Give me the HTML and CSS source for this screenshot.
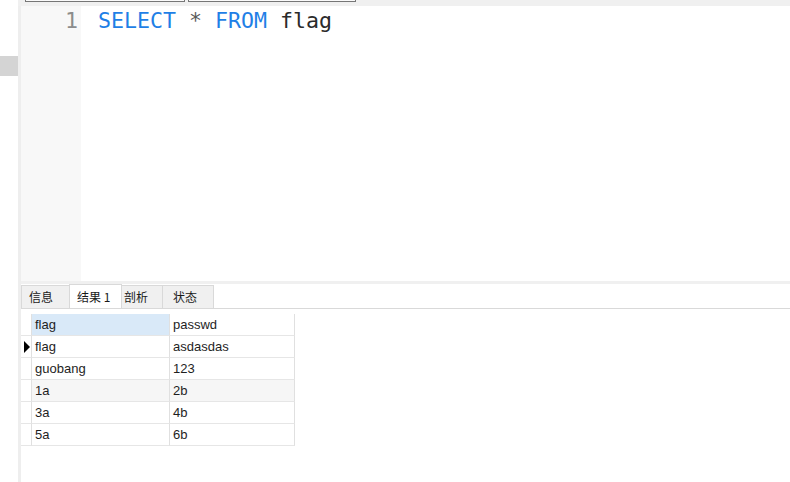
FILE: index.html
```html
<!DOCTYPE html>
<html>
<head>
<meta charset="utf-8">
<link rel="stylesheet" href="styles.css">
</head>
<body>
<div class="app">
  <div class="side"><div class="side-block"></div></div>
  <div class="main">
    <div class="topbar">
      <div class="qtab qtab-a"></div>
      <div class="qtab qtab-b"></div>
    </div>
    <div class="editor">
      <div class="gutter"><span class="ln">1</span></div>
      <div class="code"><span class="kw">SELECT</span> <span class="op">*</span> <span class="kw">FROM</span> <span class="id">flag</span></div>
    </div>
    <div class="sep"></div>
    <div class="tabs">
      <div class="tab t1">信息</div>
      <div class="tab t2 active">结果 1</div>
      <div class="tab t3">剖析</div>
      <div class="tab t4">状态</div>
    </div>
    <div class="grid-wrap">
      <div class="grid">
        <div class="ind"></div><div class="cell sel">flag</div><div class="cell">passwd</div>
        <div class="ind"><span class="arrow"></span></div><div class="cell">flag</div><div class="cell">asdasdas</div>
        <div class="ind"></div><div class="cell">guobang</div><div class="cell">123</div>
        <div class="ind"></div><div class="cell alt">1a</div><div class="cell alt">2b</div>
        <div class="ind"></div><div class="cell">3a</div><div class="cell">4b</div>
        <div class="ind"></div><div class="cell">5a</div><div class="cell">6b</div>
      </div>
    </div>
  </div>
</div>
</body>
</html>
```
FILE: styles.css
```css
* { box-sizing: border-box; }
html, body { margin: 0; padding: 0; background: #ffffff; }
body { width: 790px; height: 482px; overflow: hidden; font-family: "Liberation Sans", "Noto Sans CJK SC", sans-serif; }
.app { display: flex; height: 482px; }
.side { width: 18px; flex: none; background: #ffffff; padding-top: 56px; }
.side-block { height: 20px; background: #d4d4d4; }
.main { flex: 1; display: flex; flex-direction: column; border-left: 3px solid #eeeeee; }
.topbar { height: 6px; flex: none; background: #f0f0f0; display: flex; gap: 3px; margin-left: -3px; padding-left: 7px; }
.qtab { height: 2px; background: #fafafa; border: 1px solid #767676; border-top: none; }
.qtab-a { width: 160px; }
.qtab-b { width: 168px; }
.editor { height: 275px; flex: none; display: flex; }
.gutter { width: 60px; background: #f8f8f8; text-align: right; padding-right: 3px; padding-top: 2px; }
.ln, .code { font-family: "DejaVu Sans Mono", monospace; font-size: 21.6px; line-height: 26px; }
.ln { color: #8c8c8c; }
.code { padding-left: 17px; padding-top: 2px; white-space: pre; color: #2b2b2b; }
.kw { color: #1f7fe6; }
.op { color: #5a5a5a; }
.id { color: #2b2b2b; }
.sep { height: 3px; flex: none; background: #f0f0f0; }
.tabs { height: 25px; flex: none; display: flex; align-items: flex-end; border-bottom: 1px solid #d9d9d9; }
.tab { height: 23px; background: #f0f0f0; border: 1px solid #d9d9d9; border-bottom: none; margin-right: -1px; font-family: "Noto Sans CJK SC", sans-serif; font-size: 12px; line-height: 22px; color: #1a1a1a; white-space: nowrap; }
.t1 { width: 49px; padding-left: 7px; }
.t2 { width: 53px; padding-left: 7px; }
.t3 { width: 42px; padding-left: 2px; }
.t4 { width: 52px; padding-left: 10px; }
.tab.active { height: 24px; background: #ffffff; line-height: 24px; }
.grid-wrap { padding-top: 5px; }
.grid { display: grid; grid-template-columns: 11px 138px 125px; grid-auto-rows: 22px; width: 274px; }
.ind { border-bottom: 1px solid #e6e6e6; border-right: 1px solid #e0e0e0; display: flex; align-items: center; padding-left: 3px; }
.arrow { width: 0; height: 0; border-left: 6px solid #000000; border-top: 6px solid transparent; border-bottom: 6px solid transparent; }
.cell { border-bottom: 1px solid #e6e6e6; border-right: 1px solid #e0e0e0; font-size: 13px; line-height: 21px; padding-left: 3px; color: #1e1e1e; white-space: nowrap; }
.cell.sel { background: #d9e9f8; }
.cell.alt { background: #f6f6f6; }
```
